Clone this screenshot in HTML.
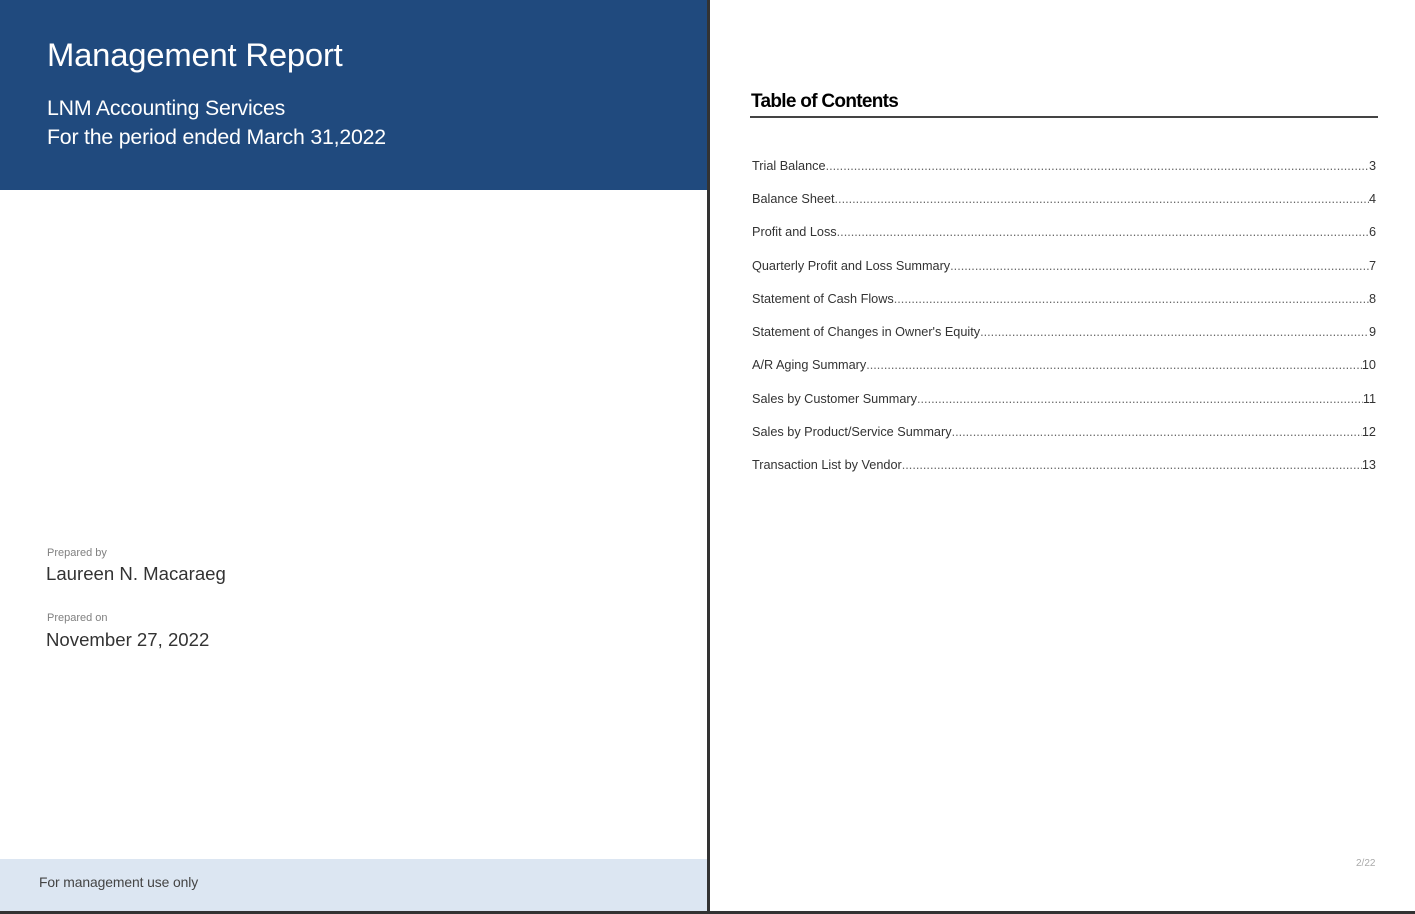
<!DOCTYPE html>
<html><head><meta charset="utf-8"><style>
*{margin:0;padding:0;box-sizing:border-box}
html,body{width:1415px;height:914px;overflow:hidden;background:#fff;font-family:"Liberation Sans",Arial,sans-serif}
.left{position:absolute;left:0;top:0;width:707px;height:911px;background:#fff}
.hdr{position:absolute;left:0;top:0;width:707px;height:190px;background:#204a7e;color:#fff}
.t1{position:absolute;left:47px;top:36px;font-size:32.8px;letter-spacing:-0.2px}
.t2{position:absolute;left:47px;top:94px;font-size:21.3px;line-height:29px;letter-spacing:-0.2px}
.lbl{position:absolute;left:47px;font-size:11px;color:#808080}
.val{position:absolute;left:46px;font-size:18.6px;color:#333}
.foot{position:absolute;left:0;top:859px;width:707px;height:52px;background:#dce6f2}
.foot span{position:absolute;left:39px;top:15px;font-size:13.9px;color:#444;letter-spacing:-0.1px}
.div{position:absolute;left:707px;top:0;width:3px;height:914px;background:#333}
.bot{position:absolute;left:0;top:911px;width:1415px;height:3px;background:#333}
.toc{position:absolute;left:751px;top:91px;font-size:19px;font-weight:bold;color:#000;letter-spacing:-0.7px}
.rule{position:absolute;left:750px;top:116px;width:628px;height:1.5px;background:#444}
.row{position:absolute;left:752px;width:624px;display:flex;font-size:12.7px;color:#333;white-space:nowrap;line-height:15px}
.row .d{flex:1;overflow:hidden;color:#666;letter-spacing:0}
.pg{position:absolute;left:1356px;top:858px;font-size:10px;color:#aaa}
</style></head><body>
<div class="left">
<div class="hdr">
<div class="t1">Management Report</div>
<div class="t2">LNM Accounting Services<br>For the period ended March 31,2022</div>
</div>
<div class="lbl" style="top:547px">Prepared by</div>
<div class="val" style="top:563px">Laureen N. Macaraeg</div>
<div class="lbl" style="top:612px">Prepared on</div>
<div class="val" style="top:629px">November 27, 2022</div>
<div class="foot"><span>For management use only</span></div>
</div>
<div class="div"></div>
<div class="bot"></div>
<div class="toc">Table of Contents</div>
<div class="rule"></div>
<div class="row" style="top:159px"><span>Trial Balance</span><span class="d">.............................................................................................................................................................................................................................................................</span><span>3</span></div>
<div class="row" style="top:192px"><span>Balance Sheet</span><span class="d">.............................................................................................................................................................................................................................................................</span><span>4</span></div>
<div class="row" style="top:225px"><span>Profit and Loss</span><span class="d">.............................................................................................................................................................................................................................................................</span><span>6</span></div>
<div class="row" style="top:259px"><span>Quarterly Profit and Loss Summary </span><span class="d">.............................................................................................................................................................................................................................................................</span><span>7</span></div>
<div class="row" style="top:292px"><span>Statement of Cash Flows</span><span class="d">.............................................................................................................................................................................................................................................................</span><span>8</span></div>
<div class="row" style="top:325px"><span>Statement of Changes in Owner's Equity</span><span class="d">.............................................................................................................................................................................................................................................................</span><span>9</span></div>
<div class="row" style="top:358px"><span>A/R Aging Summary </span><span class="d">.............................................................................................................................................................................................................................................................</span><span>10</span></div>
<div class="row" style="top:392px"><span>Sales by Customer Summary</span><span class="d">.............................................................................................................................................................................................................................................................</span><span>11</span></div>
<div class="row" style="top:425px"><span>Sales by Product/Service Summary</span><span class="d">.............................................................................................................................................................................................................................................................</span><span>12</span></div>
<div class="row" style="top:458px"><span>Transaction List by Vendor</span><span class="d">.............................................................................................................................................................................................................................................................</span><span>13</span></div>
<div class="pg">2/22</div>
</body></html>
